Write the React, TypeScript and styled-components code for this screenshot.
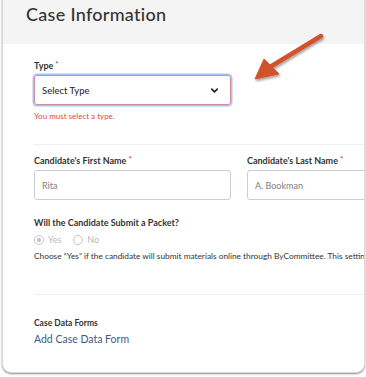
import styled, { createGlobalStyle } from "styled-components";
import { ChevronDown } from "lucide-react";

const GlobalStyle = createGlobalStyle`
  html, body {
    margin: 0;
    padding: 0;
    background: #ffffff;
    font-family: Lato, "Open Sans", Arial, sans-serif;
    color: #333;
  }
`;

function App() {
  return (
    <Page>
      <GlobalStyle />
      <Card>
        <Header>
          <Title>Case Information</Title>
        </Header>
        <Body>
          <Field>
            <Label>
              Type<Required>*</Required>
            </Label>
            <SelectBox>
              <span>Select Type</span>
              <ChevronDown size={11} strokeWidth={3.5} color="#222" />
            </SelectBox>
            <ErrorText>You must select a type.</ErrorText>
          </Field>
          <Divider $top={23} />
          <NameRow>
            <Field>
              <Label>
                Candidate's First Name<Required>*</Required>
              </Label>
              <TextInput>Rita</TextInput>
            </Field>
            <Field>
              <Label>
                Candidate's Last Name<Required>*</Required>
              </Label>
              <TextInput>A. Bookman</TextInput>
            </Field>
          </NameRow>
          <Question>Will the Candidate Submit a Packet?</Question>
          <RadioRow>
            <RadioOption>
              <Radio $checked />
              Yes
            </RadioOption>
            <RadioOption>
              <Radio />
              No
            </RadioOption>
          </RadioRow>
          <HelpText>
            Choose “Yes” if the candidate will submit materials online through
            ByCommittee. This setting can be changed later.
          </HelpText>
          <Divider $top={32} />
          <SectionLabel>Case Data Forms</SectionLabel>
          <AddLink>Add Case Data Form</AddLink>
        </Body>
      </Card>
      <Arrow viewBox="0 0 366 377" width="366" height="377">
        <defs>
          <filter id="shadow" x="-20%" y="-20%" width="140%" height="140%">
            <feDropShadow dx="1" dy="2" stdDeviation="1.2" floodColor="#000" floodOpacity="0.35" />
          </filter>
        </defs>
        <g filter="url(#shadow)" fill="#d2532b" stroke="#d2532b">
          <line x1="321" y1="36" x2="270" y2="67" strokeWidth="4.5" strokeLinecap="round" />
          <polygon points="255,79 264,59 279,74" strokeWidth="1" strokeLinejoin="round" />
        </g>
      </Arrow>
    </Page>
  );
}

const Page = styled.div`
  position: relative;
  width: 366px;
  height: 377px;
  overflow: hidden;
  padding: 0 1px 0 2px;
  box-sizing: border-box;
`;

const Card = styled.div`
  margin-top: -12px;
  height: 385px;
  box-sizing: border-box;
  border: 1px solid #d9d9d9;
  border-radius: 9px;
  box-shadow: 0 1px 2px rgba(0, 0, 0, 0.45);
  overflow: hidden;
  background: #fff;
  display: flex;
  flex-direction: column;
`;

const Header = styled.div`
  background: #f4f4f4;
  height: 55px;
  flex-shrink: 0;
  padding-left: 23px;
`;

const Title = styled.h1`
  margin: 0;
  padding-top: 13px;
  font-family: Lato, "Open Sans", sans-serif;
  font-size: 18px;
  font-weight: 500;
  line-height: 24px;
  color: #333;
  letter-spacing: 0.3px;
`;

const Body = styled.div`
  padding: 16px 0 0 31px;
  display: flex;
  flex-direction: column;
  white-space: nowrap;
`;

const Field = styled.div`
  display: flex;
  flex-direction: column;
  width: 197px;
  flex-shrink: 0;
`;

const Label = styled.div`
  font-size: 9px;
  font-weight: 700;
  line-height: 12px;
  color: #333;
  margin-bottom: 3px;
`;

const Required = styled.span`
  color: #e2403f;
  font-size: 8px;
  vertical-align: top;
  margin-left: 2px;
  line-height: 8px;
`;

const SelectBox = styled.div`
  height: 30px;
  box-sizing: border-box;
  border: 1px solid #cf8d9c;
  border-radius: 3px;
  box-shadow: 0 0 0 1.5px #a6c6f3;
  display: flex;
  align-items: center;
  justify-content: space-between;
  padding: 0 10px 0 7px;
  font-size: 9.5px;
  color: #222;
`;

const ErrorText = styled.div`
  font-size: 8px;
  color: #e0474c;
  line-height: 10px;
  margin-top: 6px;
`;

const Divider = styled.div<{ $top: number }>`
  height: 1px;
  background: #efefef;
  margin-top: ${(p) => p.$top}px;
`;

const NameRow = styled.div`
  display: flex;
  gap: 16px;
  margin-top: 10px;
`;

const TextInput = styled.div`
  height: 30px;
  box-sizing: border-box;
  border: 1px solid #c9ced6;
  border-radius: 3px;
  display: flex;
  align-items: center;
  padding: 0 7px;
  font-size: 9px;
  color: #808080;
`;

const Question = styled.div`
  font-size: 9px;
  font-weight: 700;
  line-height: 12px;
  margin-top: 17px;
`;

const RadioRow = styled.div`
  display: flex;
  gap: 12px;
  margin-top: 5px;
`;

const RadioOption = styled.label`
  display: flex;
  align-items: center;
  gap: 4px;
  font-size: 9px;
  color: #b9b9b9;
  line-height: 12px;
`;

const Radio = styled.span<{ $checked?: boolean }>`
  width: 10px;
  height: 10px;
  box-sizing: border-box;
  border: 1px solid #c4c4c4;
  border-radius: 50%;
  display: flex;
  align-items: center;
  justify-content: center;

  &::after {
    content: "";
    width: 4px;
    height: 4px;
    border-radius: 50%;
    background: #bdbdbd;
    display: ${(p) => (p.$checked ? "block" : "none")};
  }
`;

const HelpText = styled.div`
  font-size: 8.3px;
  line-height: 12px;
  color: #333;
  margin-top: 4px;
`;

const SectionLabel = styled.div`
  font-size: 8.5px;
  font-weight: 700;
  line-height: 12px;
  margin-top: 22px;
`;

const AddLink = styled.a`
  font-size: 10.5px;
  line-height: 14px;
  color: #3e5a88;
  margin-top: 3px;
  cursor: pointer;
`;

const Arrow = styled.svg`
  position: absolute;
  top: 0;
  left: 0;
  pointer-events: none;
`;

export default App;
